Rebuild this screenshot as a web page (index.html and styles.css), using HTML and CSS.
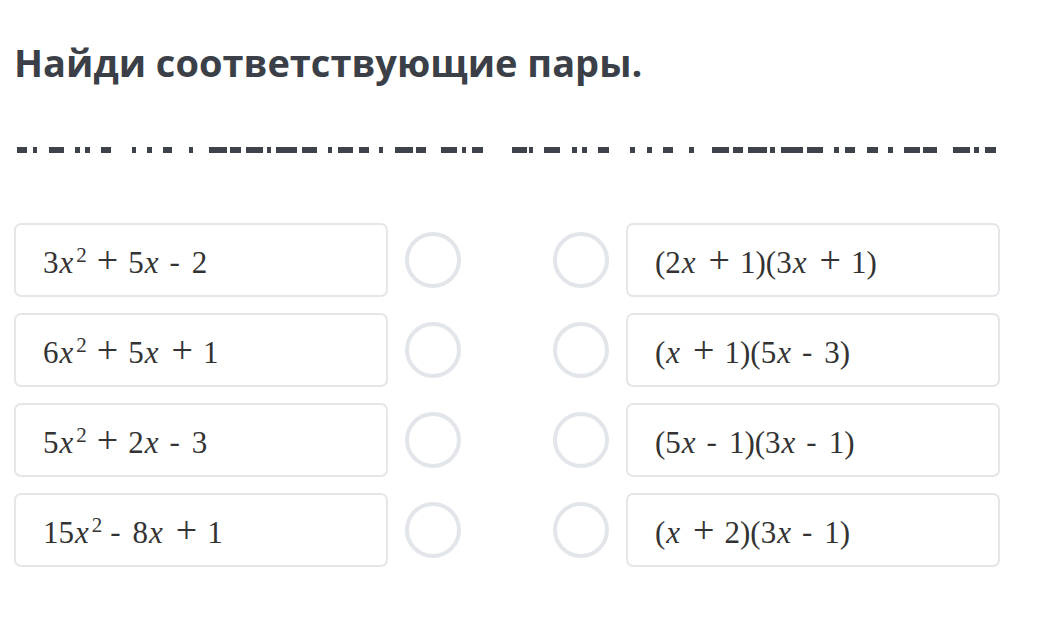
FILE: index.html
```html
<!DOCTYPE html>
<html lang="ru">
<head>
<meta charset="utf-8">
<title>Найди соответствующие пары</title>
<link rel="stylesheet" href="styles.css">
</head>
<body>
<main class="page">
  <h1 class="title">Найди соответствующие пары.</h1>
  <div class="redacted" aria-hidden="true">
    <span style="margin-left:3px;width:10px"></span><span style="margin-left:6px;width:4px"></span><span style="margin-left:12px;width:15px"></span><span style="margin-left:11px;width:5px"></span><span style="margin-left:5px;width:5px"></span><span style="margin-left:11px;width:10px"></span><span style="margin-left:21px;width:4px"></span><span style="margin-left:11px;width:5px"></span><span style="margin-left:11px;width:9px"></span><span style="margin-left:17px;width:4px"></span><span style="margin-left:16px;width:18px"></span><span style="margin-left:3px;width:11px"></span><span style="margin-left:5px;width:17px"></span><span style="margin-left:4px;width:4px"></span><span style="margin-left:5px;width:21px"></span><span style="margin-left:5px;width:15px"></span><span style="margin-left:11px;width:4px"></span><span style="margin-left:6px;width:15px"></span><span style="margin-left:6px;width:10px"></span><span style="margin-left:10px;width:4px"></span><span style="margin-left:12px;width:18px"></span><span style="margin-left:3px;width:10px"></span><span style="margin-left:15px;width:16px"></span><span style="margin-left:5px;width:4px"></span><span style="margin-left:6px;width:11px"></span><span style="margin-left:29px;width:15px"></span><span style="margin-left:2px;width:4px"></span><span style="margin-left:11px;width:16px"></span><span style="margin-left:12px;width:5px"></span><span style="margin-left:5px;width:5px"></span><span style="margin-left:11px;width:11px"></span><span style="margin-left:21px;width:5px"></span><span style="margin-left:12px;width:5px"></span><span style="margin-left:11px;width:10px"></span><span style="margin-left:16px;width:5px"></span><span style="margin-left:18px;width:17px"></span><span style="margin-left:4px;width:10px"></span><span style="margin-left:5px;width:19px"></span><span style="margin-left:3px;width:5px"></span><span style="margin-left:6px;width:22px"></span><span style="margin-left:4px;width:16px"></span><span style="margin-left:11px;width:5px"></span><span style="margin-left:6px;width:10px"></span><span style="margin-left:12px;width:11px"></span><span style="margin-left:10px;width:5px"></span><span style="margin-left:11px;width:16px"></span><span style="margin-left:3px;width:14px"></span><span style="margin-left:16px;width:17px"></span><span style="margin-left:4px;width:5px"></span><span style="margin-left:6px;width:11px"></span>
  </div>

  <div class="pairs">
    <div class="card"><span class="math">3<i>x</i><sup>2</sup><b class="plus">+</b>5<i>x</i><b class="minus">-</b>2</span></div>
    <div class="dot first"></div>
    <div class="dot second"></div>
    <div class="card"><span class="math">(2<i>x</i><b class="plus">+</b>1)(3<i>x</i><b class="plus">+</b>1)</span></div>

    <div class="card"><span class="math">6<i>x</i><sup>2</sup><b class="plus">+</b>5<i>x</i><b class="plus">+</b>1</span></div>
    <div class="dot first"></div>
    <div class="dot second"></div>
    <div class="card"><span class="math">(<i>x</i><b class="plus">+</b>1)(5<i>x</i><b class="minus">-</b>3)</span></div>

    <div class="card"><span class="math">5<i>x</i><sup>2</sup><b class="plus">+</b>2<i>x</i><b class="minus">-</b>3</span></div>
    <div class="dot first"></div>
    <div class="dot second"></div>
    <div class="card"><span class="math">(5<i>x</i><b class="minus">-</b>1)(3<i>x</i><b class="minus">-</b>1)</span></div>

    <div class="card"><span class="math">15<i>x</i><sup>2</sup><b class="minus">-</b>8<i>x</i><b class="plus">+</b>1</span></div>
    <div class="dot first"></div>
    <div class="dot second"></div>
    <div class="card"><span class="math">(<i>x</i><b class="plus">+</b>2)(3<i>x</i><b class="minus">-</b>1)</span></div>
  </div>
</main>
</body>
</html>
```

FILE: styles.css
```css
html, body {
  margin: 0;
  padding: 0;
  background: #ffffff;
}

.page {
  padding: 36px 14px 0 14px;
  font-family: "Open Sans", "Noto Sans", sans-serif;
}

.title {
  margin: 0;
  font-size: 38px;
  font-weight: 700;
  line-height: 52px;
  color: #3b3f47;
}

.redacted {
  display: flex;
  margin-top: 59px;
  height: 6px;
}

.redacted span {
  display: block;
  flex: none;
  height: 6px;
  background: #3e424a;
}

.pairs {
  display: grid;
  grid-template-columns: 374px 73px 165px 374px;
  row-gap: 16px;
  margin-top: 70px;
}

.card {
  box-sizing: border-box;
  height: 74px;
  border: 2px solid #e4e6e9;
  border-radius: 7px;
  display: flex;
  align-items: center;
  padding-left: 27px;
  background: #fff;
}

.math {
  font-family: "Liberation Serif", "DejaVu Serif", serif;
  font-size: 31px;
  color: #333333;
  white-space: pre;
  line-height: 1;
  position: relative;
  top: 2px;
}

.math i {
  font-style: italic;
  margin: 0 3px 0 1px;
}

.math .plus {
  font-weight: 400;
  font-size: 38px;
  line-height: 0;
  margin: 0 10px 0 10px;
}

.math .minus {
  font-weight: 400;
  display: inline-block;
  margin: 0 12px 0 8px;
  position: relative;
  top: -1px;
}

.math sup {
  font-size: 21px;
  line-height: 0;
  vertical-align: 11px;
}

.dot {
  box-sizing: border-box;
  width: 56px;
  height: 56px;
  align-self: center;
  border: 4px solid #e2e5e9;
  border-radius: 50%;
}

.dot.first {
  margin-left: 17px;
}

.dot.second {
  margin-left: 92px;
}
```
